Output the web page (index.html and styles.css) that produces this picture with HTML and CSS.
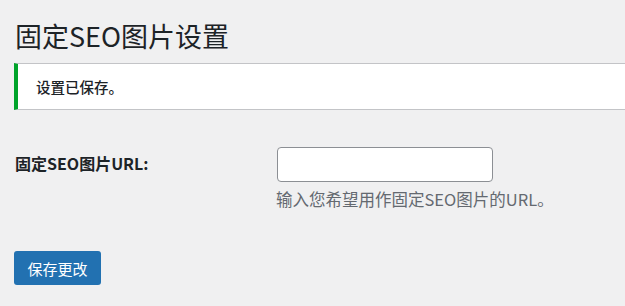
FILE: index.html
```html
<!DOCTYPE html>
<html lang="zh-CN">
<head>
<meta charset="utf-8">
<link rel="stylesheet" href="styles.css">
</head>
<body>
<div class="wrap">
  <h1 class="page-title">固定SEO图片设置</h1>
  <div class="notice"><p>设置已保存。</p></div>
  <form class="settings">
    <div class="field-row">
      <label class="field-label" for="seo-url">固定SEO图片URL:</label>
      <div class="field-body">
        <input id="seo-url" class="text-input" type="text">
        <p class="description">输入您希望用作固定SEO图片的URL。</p>
      </div>
    </div>
    <div class="submit-row">
      <button type="button" class="button-primary">保存更改</button>
    </div>
  </form>
</div>
</body>
</html>
```

FILE: styles.css
```css
html, body {
  margin: 0;
  padding: 0;
  background: #f0f0f1;
  overflow: hidden;
}
body {
  font-family: "Noto Sans CJK SC", "Noto Sans", sans-serif;
  color: #1d2327;
}
.wrap {
  padding: 18px 0 0 14px;
}
.page-title {
  margin: 0 0 0 1px;
  font-size: 27px;
  font-weight: 400;
  line-height: 36px;
}
.notice {
  margin: 9px -60px 0 0;
  background: #fff;
  border-top: 1px solid #c3c4c7;
  border-bottom: 1px solid #c3c4c7;
  border-left: 4px solid #00a32a;
  height: 45px;
  display: flex;
  align-items: center;
  padding-left: 18px;
}
.notice p {
  margin: 0;
  font-size: 14.5px;
  font-weight: 500;
}
.settings {
  margin-top: 37px;
}
.field-row {
  display: grid;
  grid-template-columns: 263px 1fr;
}
.field-label {
  font-size: 16px;
  font-weight: 700;
  padding: 4px 0 0 1px;
  line-height: 24px;
}
.text-input {
  box-sizing: border-box;
  width: 216px;
  height: 35px;
  border: 1px solid #8c8f94;
  border-radius: 4px;
  background: #fff;
  margin: 0;
  display: block;
}
.description {
  margin: 6px 0 0 -1px;
  font-size: 16.5px;
  line-height: 22px;
  color: #646970;
}
.submit-row {
  margin-top: 41px;
}
.button-primary {
  font-family: inherit;
  background: #2271b1;
  color: #fff;
  border: none;
  border-radius: 3px;
  width: 87px;
  height: 34px;
  font-size: 15px;
  padding: 0;
  margin: 0;
  display: block;
}
```
